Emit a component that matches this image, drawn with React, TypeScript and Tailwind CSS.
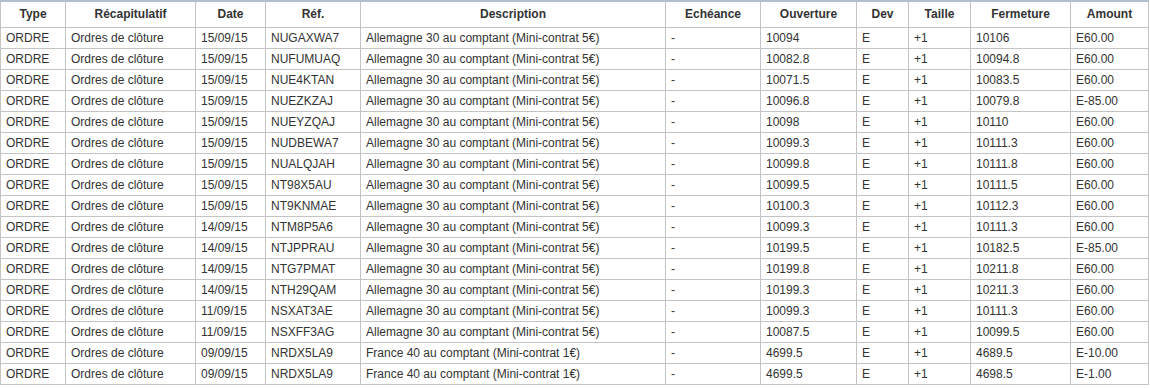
import React from "react";

const rows: string[][] = [
  ["15/09/15", "NUGAXWA7", "Allemagne 30 au comptant (Mini-contrat 5€)", "10094", "10106", "E60.00"],
  ["15/09/15", "NUFUMUAQ", "Allemagne 30 au comptant (Mini-contrat 5€)", "10082.8", "10094.8", "E60.00"],
  ["15/09/15", "NUE4KTAN", "Allemagne 30 au comptant (Mini-contrat 5€)", "10071.5", "10083.5", "E60.00"],
  ["15/09/15", "NUEZKZAJ", "Allemagne 30 au comptant (Mini-contrat 5€)", "10096.8", "10079.8", "E-85.00"],
  ["15/09/15", "NUEYZQAJ", "Allemagne 30 au comptant (Mini-contrat 5€)", "10098", "10110", "E60.00"],
  ["15/09/15", "NUDBEWA7", "Allemagne 30 au comptant (Mini-contrat 5€)", "10099.3", "10111.3", "E60.00"],
  ["15/09/15", "NUALQJAH", "Allemagne 30 au comptant (Mini-contrat 5€)", "10099.8", "10111.8", "E60.00"],
  ["15/09/15", "NT98X5AU", "Allemagne 30 au comptant (Mini-contrat 5€)", "10099.5", "10111.5", "E60.00"],
  ["15/09/15", "NT9KNMAE", "Allemagne 30 au comptant (Mini-contrat 5€)", "10100.3", "10112.3", "E60.00"],
  ["14/09/15", "NTM8P5A6", "Allemagne 30 au comptant (Mini-contrat 5€)", "10099.3", "10111.3", "E60.00"],
  ["14/09/15", "NTJPPRAU", "Allemagne 30 au comptant (Mini-contrat 5€)", "10199.5", "10182.5", "E-85.00"],
  ["14/09/15", "NTG7PMAT", "Allemagne 30 au comptant (Mini-contrat 5€)", "10199.8", "10211.8", "E60.00"],
  ["14/09/15", "NTH29QAM", "Allemagne 30 au comptant (Mini-contrat 5€)", "10199.3", "10211.3", "E60.00"],
  ["11/09/15", "NSXAT3AE", "Allemagne 30 au comptant (Mini-contrat 5€)", "10099.3", "10111.3", "E60.00"],
  ["11/09/15", "NSXFF3AG", "Allemagne 30 au comptant (Mini-contrat 5€)", "10087.5", "10099.5", "E60.00"],
  ["09/09/15", "NRDX5LA9", "France 40 au comptant (Mini-contrat 1€)", "4699.5", "4689.5", "E-10.00"],
  ["09/09/15", "NRDX5LA9", "France 40 au comptant (Mini-contrat 1€)", "4699.5", "4698.5", "E-1.00"],
];

const headers = [
  "Type",
  "Récapitulatif",
  "Date",
  "Réf.",
  "Description",
  "Echéance",
  "Ouverture",
  "Dev",
  "Taille",
  "Fermeture",
  "Amount",
];

const widths = [65, 130, 70, 95, 305, 95, 96, 52, 62, 100, 78];

export default function App() {
  return (
    <div className="bg-white w-[1150px] h-[388px] overflow-hidden font-['Liberation_Sans',Arial,sans-serif] text-[12px] text-[#333]">
      <table className="table-fixed border-collapse w-[1149px] border-t-2 border-t-[#b3bfcc]">
        <colgroup>
          {widths.map((w, i) => (
            <col key={i} style={{ width: w }} />
          ))}
        </colgroup>
        <thead>
          <tr className="h-[26px]">
            {headers.map((h) => (
              <th
                key={h}
                className="border border-[#c4c4c4] border-t-0 font-bold text-center px-1 leading-[14px] text-[#333]"
              >
                {h}
              </th>
            ))}
          </tr>
        </thead>
        <tbody>
          {rows.map((r, i) => (
            <tr key={i} className="h-[21px]">
              <td className="border border-[#c4c4c4] pl-[5px] leading-[14px]">ORDRE</td>
              <td className="border border-[#c4c4c4] pl-[5px] leading-[14px]">Ordres de clôture</td>
              <td className="border border-[#c4c4c4] pl-[5px] leading-[14px]">{r[0]}</td>
              <td className="border border-[#c4c4c4] pl-[5px] leading-[14px]">{r[1]}</td>
              <td className="border border-[#c4c4c4] pl-[5px] leading-[14px]">{r[2]}</td>
              <td className="border border-[#c4c4c4] pl-[5px] leading-[14px]">-</td>
              <td className="border border-[#c4c4c4] pl-[5px] leading-[14px]">{r[3]}</td>
              <td className="border border-[#c4c4c4] pl-[5px] leading-[14px]">E</td>
              <td className="border border-[#c4c4c4] pl-[5px] leading-[14px]">+1</td>
              <td className="border border-[#c4c4c4] pl-[5px] leading-[14px]">{r[4]}</td>
              <td className="border border-[#c4c4c4] pl-[5px] leading-[14px]">{r[5]}</td>
            </tr>
          ))}
        </tbody>
      </table>
    </div>
  );
}
